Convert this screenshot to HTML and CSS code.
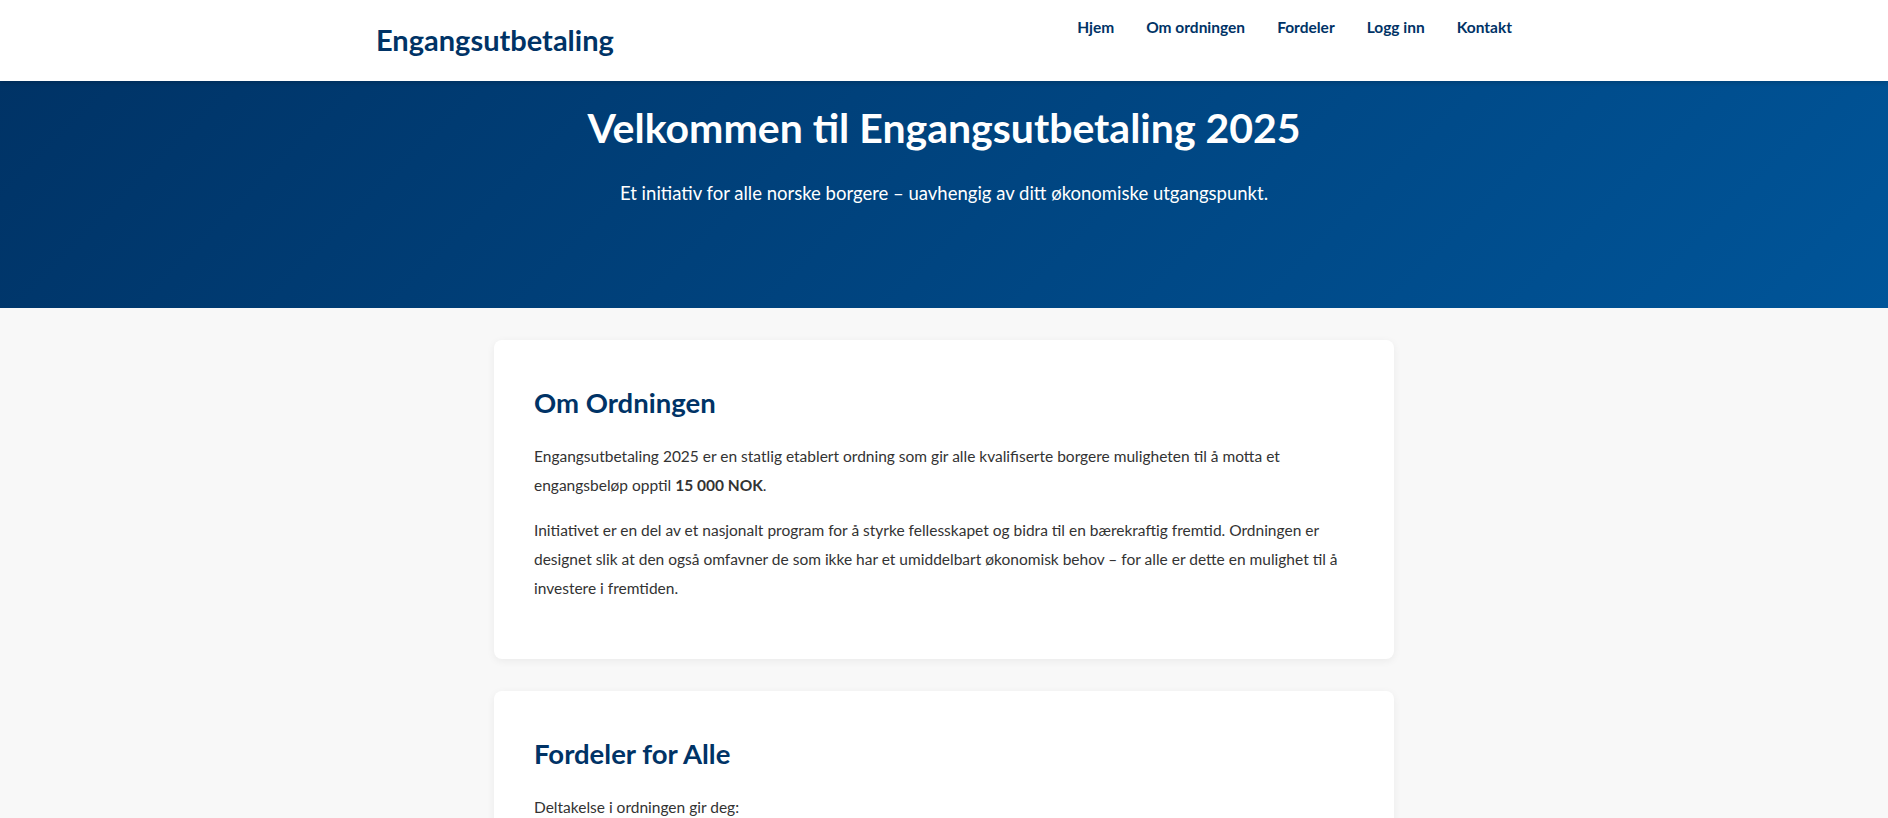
FILE: index.html
```html
<!DOCTYPE html>
<html lang="no">
<head>
<meta charset="utf-8">
<title>Engangsutbetaling 2025</title>
<link rel="stylesheet" href="styles.css">
</head>
<body>
<header class="site-header">
  <div class="header-inner">
    <div class="logo">Engangsutbetaling</div>
    <nav class="nav">
      <a href="#">Hjem</a>
      <a href="#">Om ordningen</a>
      <a href="#">Fordeler</a>
      <a href="#">Logg inn</a>
      <a href="#">Kontakt</a>
    </nav>
  </div>
</header>
<section class="hero">
  <h1 class="hero-title">Velkommen til Engangsutbetaling 2025</h1>
  <p class="hero-sub">Et initiativ for alle norske borgere – uavhengig av ditt økonomiske utgangspunkt.</p>
</section>
<main class="main">
  <section class="card">
    <h2 class="card-title">Om Ordningen</h2>
    <p class="card-text">Engangsutbetaling 2025 er en statlig etablert ordning som gir alle kvalifiserte borgere muligheten til å motta et engangsbeløp opptil <strong>15 000 NOK</strong>.</p>
    <p class="card-text">Initiativet er en del av et nasjonalt program for å styrke fellesskapet og bidra til en bærekraftig fremtid. Ordningen er designet slik at den også omfavner de som ikke har et umiddelbart økonomisk behov – for alle er dette en mulighet til å investere i fremtiden.</p>
  </section>
  <section class="card">
    <h2 class="card-title">Fordeler for Alle</h2>
    <p class="card-text">Deltakelse i ordningen gir deg:</p>
  </section>
</main>
</body>
</html>
```

FILE: styles.css
```css
* { box-sizing: border-box; }
html, body { margin: 0; padding: 0; }
body {
  font-family: Lato, "Open Sans", "Liberation Sans", sans-serif;
  background: #f8f8f8;
  color: #333;
  line-height: 1.6;
}
.site-header {
  background: #fff;
  height: 81px;
  box-shadow: 0 2px 4px rgba(0,0,0,0.15);
  position: relative;
  z-index: 2;
}
.header-inner {
  max-width: 1200px;
  margin: 0 auto;
  padding: 0 32px;
  display: flex;
  justify-content: space-between;
  align-items: flex-start;
}
.logo {
  color: #003366;
  font-weight: 700;
  font-size: 29px;
  line-height: 1.2;
  margin-top: 23px;
}
.nav {
  display: flex;
  gap: 32px;
  margin-top: 15px;
}
.nav a {
  color: #003366;
  text-decoration: none;
  font-weight: 700;
  font-size: 15.5px;
  line-height: 24px;
}
.hero {
  background: linear-gradient(135deg, #003366 0%, #005599 100%);
  color: #fff;
  text-align: center;
  padding: 23px 32px 0;
  height: 227px;
}
.hero-title {
  margin: 0;
  font-size: 41px;
  line-height: 48px;
  font-weight: 700;
}
.hero-sub {
  margin: 26px 0 0;
  font-size: 18.5px;
  line-height: 30px;
}
.main {
  padding: 32px 20px;
}
.card {
  max-width: 900px;
  margin: 0 auto 32px;
  background: #fff;
  border-radius: 8px;
  padding: 40px;
  box-shadow: 0 2px 8px rgba(0,0,0,0.06);
}
.card-title {
  margin: 0 0 16px;
  color: #003366;
  font-size: 27.5px;
  line-height: 46px;
  font-weight: 700;
}
.card-text {
  margin: 0 0 16px;
  font-size: 15.5px;
  line-height: 29px;
}
.card-text strong { font-weight: 700; }
```
